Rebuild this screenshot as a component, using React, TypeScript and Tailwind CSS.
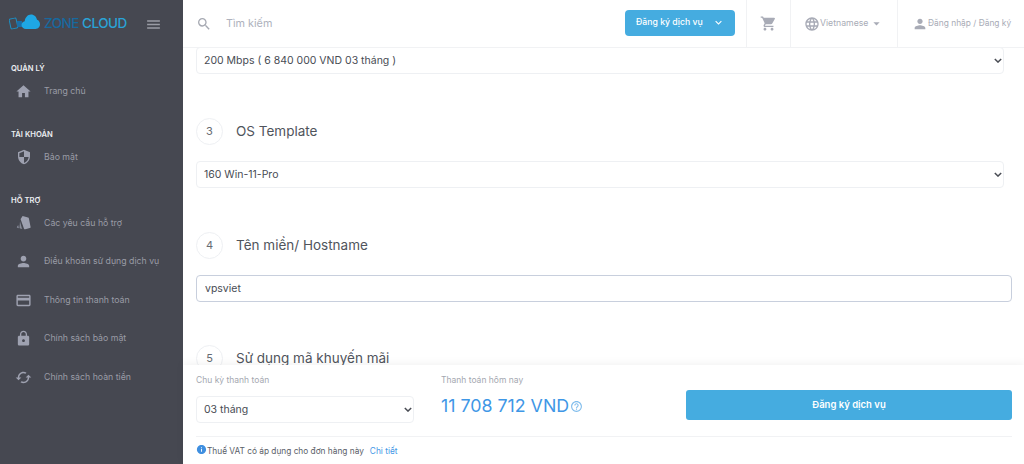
import React from 'react';
import {
  MdHome,
  MdSecurity,
  MdPerson,
  MdCreditCard,
  MdLock,
  MdCached,
  MdShoppingCart,
  MdLanguage,
  MdArrowDropDown,
  MdMenu,
  MdInfo,
  MdHelpOutline,
  MdKeyboardArrowDown,
  MdSearch,
} from 'react-icons/md';

const TicketIcon = ({ className }: { className?: string }) => (
  <svg viewBox="0 0 16 16" className={className} fill="currentColor">
    <path d="M6.6 1 12 2.400c.5.100.8.500.9 1l1.700 8.600c.1.500-.2.900-.7 1l-4.700 1.300c-.5.100-1-.1-1.200-.6L4.700 4.600c-.2-.4 0-.8.300-1.100z" />
    <path d="M4 6.500 5.800 13c.1.400.3.700.6 1l-2.200-.4c-.5-.1-.7-.5-.7-1zM2.200 10l.7 3.200-1.600-.4c-.4-.1-.6-.5-.4-.9z" opacity="0.75" />
  </svg>
);

const Logo = () => (
  <svg viewBox="0 0 32 18" className="w-[32px] h-[18px] shrink-0 -mt-[4px]">
    <rect x="1" y="5.500" width="7" height="10" rx="1.200" transform="rotate(-12 4.500 10.500)" fill="none" stroke="#1c8fc4" strokeWidth="1" />
    <path d="M8 8h5v6H8z" fill="#1a6fa8" />
    <path d="M17 16c-2.500 0-4.500-1.800-4.500-4 0-2 1.400-3.400 3.200-3.800C16.200 4.400 18.800 1.500 22 1.500c3.200 0 5.500 2.300 6 5.200 1.800.4 3 2.500 3 4.600 0 2.600-2 4.700-4.400 4.700z" fill="#1ea7e4" />
  </svg>
);

const sections = [
  {
    title: 'QUẢN LÝ',
    items: [{ label: 'Trang chủ', icon: <MdHome className="w-[17px] h-[17px]" /> }],
  },
  {
    title: 'TÀI KHOẢN',
    items: [{ label: 'Bảo mật', icon: <MdSecurity className="w-[16px] h-[16px]" /> }],
  },
  {
    title: 'HỖ TRỢ',
    items: [
      { label: 'Các yêu cầu hỗ trợ', icon: <TicketIcon className="w-[16px] h-[16px]" /> },
      { label: 'Điều khoản sử dụng dịch vụ', icon: <MdPerson className="w-[17px] h-[17px]" /> },
      { label: 'Thông tin thanh toán', icon: <MdCreditCard className="w-[17px] h-[17px]" /> },
      { label: 'Chính sách bảo mật', icon: <MdLock className="w-[17px] h-[17px]" /> },
      { label: 'Chính sách hoàn tiền', icon: <MdCached className="w-[17px] h-[17px]" /> },
    ],
  },
];

const Sidebar = () => (
  <aside className="w-[183px] shrink-0 h-full bg-[#464851] flex flex-col">
    <div className="h-[48px] shrink-0 flex items-center pl-[9px] pr-[21px]">
      <Logo />
      <span className="ml-[3px] -mt-[1px] text-[13.500px] font-medium tracking-[-0.5px] whitespace-nowrap">
        <span className="text-[#17699f]">ZONE</span> <span className="text-[#2aa3d6]">CLOUD</span>
      </span>
      <MdMenu className="ml-auto w-[17px] h-[17px] text-[#9a9ca5]" />
    </div>
    <div className="flex flex-col pt-[14px] gap-[17.500px]">
      {sections.map((s) => (
        <div key={s.title} className="flex flex-col">
          <div className="h-[14px] -mb-[4px] pl-[11px] flex items-center text-[7.600px] font-semibold text-[#eceef2]">
            {s.title}
          </div>
          {s.items.map((item) => (
            <div key={item.label} className="h-[38.500px] flex items-center text-[#9ea1b0]">
              <div className="w-[44px] shrink-0 flex justify-center pl-[3px]">
                <span className="block">{item.icon}</span>
              </div>
              <span className="text-[8.750px] text-[#9a9ca6] whitespace-nowrap">{item.label}</span>
            </div>
          ))}
        </div>
      ))}
    </div>
  </aside>
);

const Header = () => (
  <header className="h-[48px] shrink-0 bg-white border-b border-[#f1f2f4] flex items-stretch">
    <div className="flex items-center pl-[13px] flex-1">
      <MdSearch className="w-[16px] h-[16px] text-[#a6a9b2]" />
      <span className="ml-[14px] mt-[1px] text-[10.800px] text-[#aeb2bd]">Tìm kiếm</span>
    </div>
    <div className="flex items-center pr-[11px] pb-[2px]">
      <button className="w-[110px] h-[26px] rounded-[4px] bg-[#45ace0] text-white text-[8.700px] font-medium flex items-center pl-[11px] gap-[9px] whitespace-nowrap">
        Đăng ký dịch vụ
        <MdKeyboardArrowDown className="w-[13px] h-[13px]" />
      </button>
    </div>
    <div className="w-[44px] border-l border-[#f1f2f4] flex items-center justify-center">
      <MdShoppingCart className="w-[17px] h-[17px] text-[#a8abb6]" />
    </div>
    <div className="w-[107px] border-l border-[#f1f2f4] flex items-center pl-[14px]">
      <MdLanguage className="w-[16px] h-[16px] text-[#a8abb6] -ml-[1px]" />
      <span className="text-[8.700px] text-[#a8abb6]">Vietnamese</span>
      <MdArrowDropDown className="w-[15px] h-[15px] text-[#a8abb6] ml-[1px]" />
    </div>
    <div className="w-[127px] border-l border-[#f1f2f4] flex items-center pl-[14px] whitespace-nowrap">
      <MdPerson className="w-[16px] h-[16px] text-[#a8abb6]" />
      <span className="text-[8.400px] text-[#a8abb6]">Đăng nhập / Đăng ký</span>
    </div>
  </header>
);

const StepTitle = ({ n, title }: { n: number; title: string }) => (
  <div className="flex items-center gap-[13px] h-[27px]">
    <span className="w-[27px] h-[27px] rounded-full border border-[#eef0f3] flex items-center justify-center text-[11px] text-[#666a72]">
      {n}
    </span>
    <span className="text-[13.500px] text-[#50545c] whitespace-nowrap">{title}</span>
  </div>
);

const Select = ({ value, className }: { value: string; className: string }) => (
  <div className={'relative h-[27px] ' + className}>
    <select
      className="appearance-none block w-full h-full bg-white border border-[#eef0f3] rounded-[4px] pl-[7px] text-[10.500px] text-[#484c54]"
      defaultValue={value}
    >
      <option value={value}>{value}</option>
    </select>
    <svg
      viewBox="0 0 10 6"
      className="absolute right-[2px] top-[11px] w-[8px] h-[5px] text-[#4a4d55]"
      fill="none"
      stroke="currentColor"
      strokeWidth="1.800"
    >
      <path d="M1 1l4 4 4-4" />
    </svg>
  </div>
);

const App = () => (
  <div className="w-[1024px] h-[464px] flex overflow-hidden bg-white font-['Inter','Noto_Sans',sans-serif]">
    <Sidebar />
    <div className="flex-1 min-w-0 flex flex-col h-full">
      <Header />
      <main className="flex-1 min-h-0 overflow-hidden pl-[13px] pr-[12px]">
        <Select value="200 Mbps ( 6 840 000 VND 03 tháng )" className="w-[808px] -mt-[1px]" />
        <div className="mt-[44px]">
          <StepTitle n={3} title="OS Template" />
        </div>
        <Select value="160 Win-11-Pro" className="w-[808px] mt-[16px]" />
        <div className="mt-[44px]">
          <StepTitle n={4} title="Tên miền/ Hostname" />
        </div>
        <input
          readOnly
          value="vpsviet"
          className="block w-full h-[27px] mt-[16px] border border-[#c8cfdd] rounded-[4px] pl-[8px] text-[10.500px] text-[#484c54] outline-none"
        />
        <div className="mt-[43px]">
          <StepTitle n={5} title="Sử dụng mã khuyến mãi" />
        </div>
      </main>
      <footer className="relative h-[99px] shrink-0 bg-white shadow-[0_-2px_8px_rgba(0,0,0,0.05)] pl-[13px] pr-[12px] flex flex-col">
        <div className="h-[72px] flex border-b border-[#f1f2f4]">
          <div className="w-[218px] pt-[10px]">
            <div className="text-[8.500px] leading-[11px] text-[#a4a7b0]">Chu kỳ thanh toán</div>
            <Select value="03 tháng" className="mt-[10px]" />
          </div>
          <div className="w-[245px] ml-[27px] pt-[10px]">
            <div className="text-[8.500px] leading-[11px] text-[#a4a7b0]">Thanh toán hôm nay</div>
            <div className="mt-[8px] flex items-center">
              <span className="text-[17.800px] leading-[24px] text-[#3f97e6] whitespace-nowrap">11 708 712 VND</span>
              <MdHelpOutline className="ml-[1px] w-[13px] h-[13px] text-[#7fbcec]" />
            </div>
          </div>
          <div className="flex-1 pt-[25px]">
            <button className="w-full h-[30px] rounded-[3px] bg-[#45ace0] text-white text-[9.500px] font-semibold">
              Đăng ký dịch vụ
            </button>
          </div>
        </div>
        <div className="flex items-center h-[27px] pt-[2px] text-[8.300px] text-[#5a5e67] whitespace-nowrap">
          <MdInfo className="w-[11px] h-[11px] text-[#3f8fe0] -mt-[5px]" />
          <span>Thuế VAT có áp dụng cho đơn hàng này</span>
          <span className="ml-[6px] text-[#3f97e6]">Chi tiết</span>
        </div>
      </footer>
    </div>
  </div>
);

export default App;
